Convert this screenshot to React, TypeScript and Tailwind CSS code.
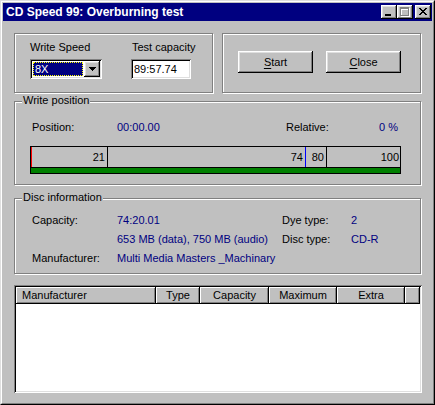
import React from 'react';

// Win95 bevels
const raised =
  'shadow-[inset_-1px_-1px_0_#000,inset_1px_1px_0_#fff,inset_-2px_-2px_0_#808080,inset_2px_2px_0_#dfdfdf]';
const sunken =
  'shadow-[inset_1px_1px_0_#808080,inset_-1px_-1px_0_#fff,inset_2px_2px_0_#000,inset_-2px_-2px_0_#dfdfdf]';
const headerCell = 'shadow-[inset_-1px_-1px_0_#000,inset_1px_1px_0_#fff,inset_-2px_-2px_0_#808080]';

interface GroupBoxProps {
  title?: string;
  className?: string;
  children: React.ReactNode;
}

const GroupBox: React.FC<GroupBoxProps> = ({ title, className = '', children }) => (
  <div className={`relative border border-[#808080] shadow-[inset_1px_1px_0_#fff,1px_1px_0_#fff] ${className}`}>
    {title && (
      <span className="absolute -top-[8px] left-[7px] px-px bg-[#c0c0c0] leading-[13px] whitespace-nowrap">
        {title}
      </span>
    )}
    {children}
  </div>
);

const TitleButton: React.FC<{ children: React.ReactNode }> = ({ children }) => (
  <div className={`w-[16px] h-[14px] bg-[#c0c0c0] ${raised}`}>
    <svg width="16" height="14" viewBox="0 0 16 14" shapeRendering="crispEdges">
      {children}
    </svg>
  </div>
);

const TitleBar: React.FC = () => (
  <div className="h-[18px] bg-[#000080] flex items-center pl-[3px] pr-px shrink-0">
    <span className="text-white font-bold text-[12px] leading-[18px] whitespace-nowrap">
      CD Speed 99: Overburning test
    </span>
    <div className="ml-auto flex items-center">
      <TitleButton>
        <rect x="4" y="9" width="6" height="2" fill="#000" />
      </TitleButton>
      <TitleButton>
        {/* disabled maximize */}
        <path d="M4 3h9v9H4zM5 5h7v6H5z" fillRule="evenodd" fill="#fff" />
        <path d="M3 2h9v9H3zM4 4h7v6H4z" fillRule="evenodd" fill="#808080" />
      </TitleButton>
      <div className="w-[2px]" />
      <TitleButton>
        <path
          d="M4 3h2v1H4zM10 3h2v1h-2zM5 4h2v1H5zM9 4h2v1H9zM6 5h4v1H6zM7 6h2v1H7zM6 7h4v1H6zM5 8h2v1H5zM9 8h2v1H9zM4 9h2v1H4zM10 9h2v1h-2z"
          fill="#000"
        />
      </TitleButton>
    </div>
  </div>
);

const PushButton: React.FC<{ hot: string; rest: string }> = ({ hot, rest }) => (
  <div className={`w-[75px] h-[22px] bg-[#c0c0c0] flex items-center justify-center ${raised}`}>
    <span>
      <span className="underline underline-offset-[2px]">{hot}</span>
      {rest}
    </span>
  </div>
);

export default function App() {
  return (
    <div className="w-[435px] h-[405px] bg-[#c0c0c0] border border-t-[#dfdfdf] border-l-[#dfdfdf] border-r-black border-b-black font-['Liberation_Sans',Arial,sans-serif] text-[11px] text-black">
      <div className="h-full flex flex-col p-px border border-t-white border-l-white border-r-[#808080] border-b-[#808080]">
        <TitleBar />

        <div className="flex flex-col pt-[12px] pl-[11px]">
          {/* Top row */}
          <div className="flex gap-[9px]">
            <GroupBox className="w-[199px] h-[60px] flex gap-[29px] pt-[7px] pl-[15px]">
              <div className="flex flex-col w-[72px]">
                <span className="leading-[13px]">Write Speed</span>
                <div className={`mt-[5px] w-[72px] h-[20px] p-[2px] bg-white flex ${sunken}`}>
                  <div className="mt-px ml-px w-[50px] h-[14px] bg-[#000080] border border-dotted border-[#ffff00] text-white leading-[12px] pl-px">
                    8X
                  </div>
                  <div className={`ml-auto w-[16px] h-[16px] bg-[#c0c0c0] flex items-center justify-center ${raised}`}>
                    <svg width="7" height="4" viewBox="0 0 7 4" shapeRendering="crispEdges">
                      <path d="M0 0h7v1H0zM1 1h5v1H1zM2 2h3v1H2zM3 3h1v1H3z" fill="#000" />
                    </svg>
                  </div>
                </div>
              </div>
              <div className="flex flex-col">
                <span className="leading-[13px] pl-px">Test capacity</span>
                <div className={`mt-[5px] w-[60px] h-[20px] bg-white pl-[3px] leading-[20px] ${sunken}`}>
                  89:57.74
                </div>
              </div>
            </GroupBox>

            <GroupBox className="w-[199px] h-[60px] flex gap-[13px] pt-[17px] pl-[15px]">
              <PushButton hot="S" rest="tart" />
              <PushButton hot="C" rest="lose" />
            </GroupBox>
          </div>

          {/* Write position */}
          <GroupBox title="Write position" className="mt-[8px] w-[407px] h-[84px] flex flex-col">
            <div className="flex pt-[19px] pl-[17px] pr-[22px] leading-[13px]">
              <span className="w-[85px]">Position:</span>
              <span className="w-[169px] text-[#000080]">00:00.00</span>
              <span>Relative:</span>
              <span className="ml-auto text-[#000080]">0 %</span>
            </div>
            <div className="mt-[12px] ml-[15px] w-[371px] h-[28px] border border-black flex flex-col">
              <div className="h-[20px] flex leading-[20px]">
                <div className="w-[77px] border-l border-l-[#ff0000] border-r border-r-black text-right pr-[2px]">21</div>
                <div className="w-[198px] border-r border-r-[#0000ff] text-right pr-[2px]">74</div>
                <div className="w-[21px] border-r border-r-black text-right pr-[2px]">80</div>
                <div className="flex-1 text-right pr-px">100</div>
              </div>
              <div className="h-[6px] border-t border-black bg-[#008000]" />
            </div>
          </GroupBox>

          {/* Disc information */}
          <GroupBox title="Disc information" className="mt-[13px] w-[407px] h-[76px]">
            <div className="grid grid-cols-[85px_165px_69px_1fr] pt-[12px] pl-[17px] leading-[19px]">
              <span>Capacity:</span>
              <span className="text-[#000080]">74:20.01</span>
              <span>Dye type:</span>
              <span className="text-[#000080]">2</span>

              <span />
              <span className="text-[#000080] whitespace-nowrap">653 MB (data), 750 MB (audio)</span>
              <span>Disc type:</span>
              <span className="text-[#000080]">CD-R</span>

              <span>Manufacturer:</span>
              <span className="col-span-3 text-[#000080]">Multi Media Masters _Machinary</span>
            </div>
          </GroupBox>

          {/* Results list */}
          <div className={`mt-[11px] w-[408px] h-[108px] bg-white p-[2px] flex flex-col ${sunken}`}>
            <div className="h-[17px] flex bg-[#c0c0c0] leading-[17px]">
              <div className={`w-[140px] pl-[6px] ${headerCell}`}>Manufacturer</div>
              <div className={`w-[44px] text-center ${headerCell}`}>Type</div>
              <div className={`w-[69px] text-center ${headerCell}`}>Capacity</div>
              <div className={`w-[68px] text-center ${headerCell}`}>Maximum</div>
              <div className={`w-[68px] text-center ${headerCell}`}>Extra</div>
              <div className={`flex-1 ${headerCell}`} />
            </div>
          </div>
        </div>
      </div>
    </div>
  );
}
